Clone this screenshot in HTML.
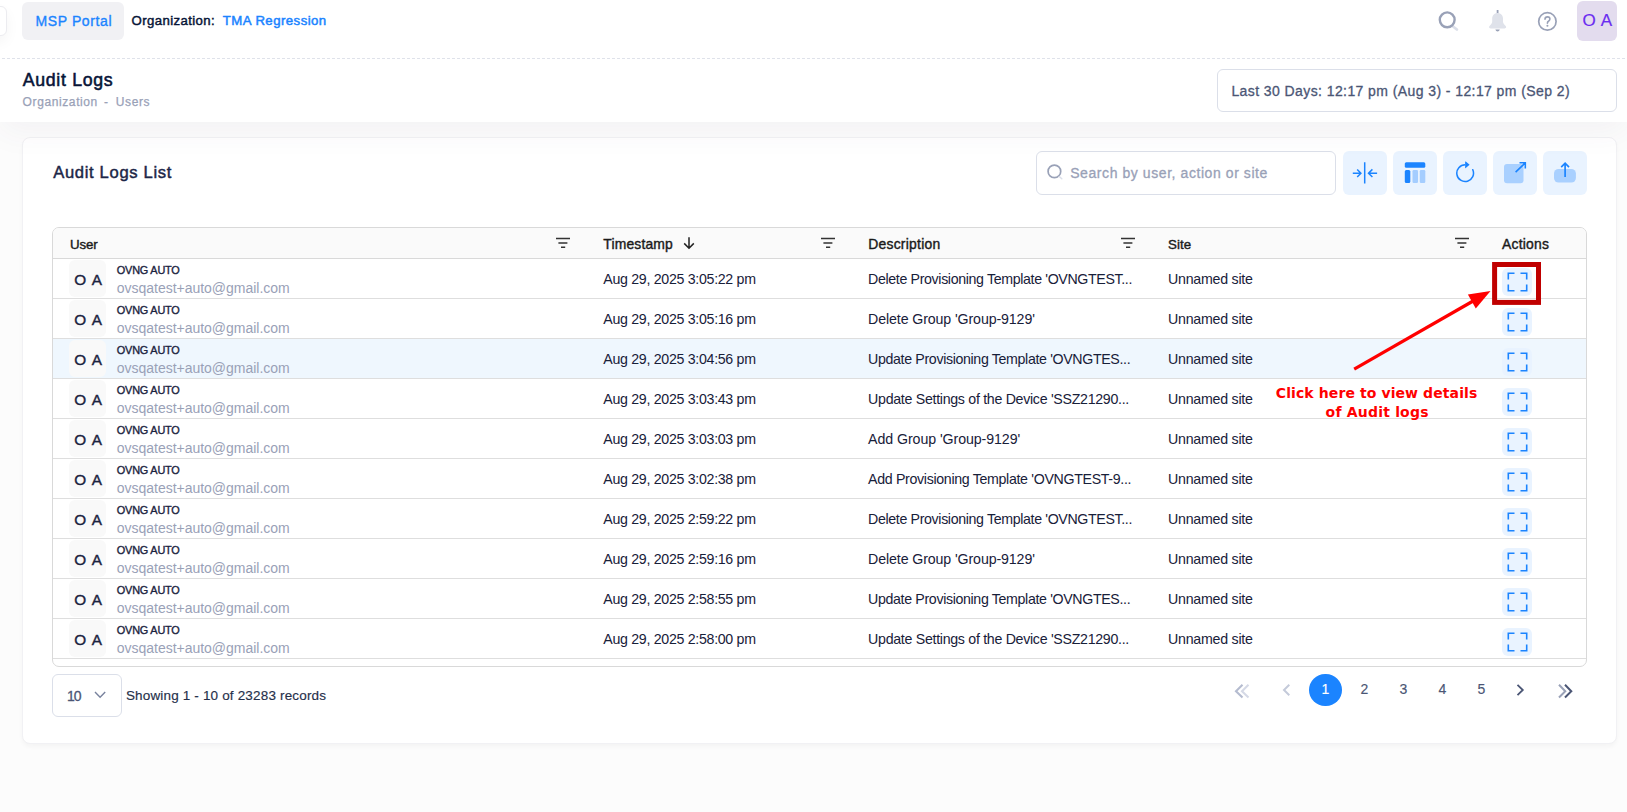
<!DOCTYPE html>
<html lang="en"><head><meta charset="utf-8"><title>Audit Logs</title>
<style>
html,body{margin:0;padding:0}
body{width:1627px;height:812px;overflow:hidden;position:relative;background:#fcfcfc;font-family:"Liberation Sans",sans-serif}
div,header,main,section,nav,svg,h1,h2,span,button{position:absolute;box-sizing:border-box;margin:0;padding:0}
.t{white-space:nowrap;line-height:1;font-weight:400;display:block}
header.top{left:0;top:0;width:1627px;height:122px;background:#fff;}
.stub{left:-26px;top:6px;width:32.500px;height:30px;background:#fff;border:1px solid #ececf0;border-radius:6px;box-shadow:0 6px 14px rgba(0,0,0,.045)}
.msp{left:22px;top:2px;width:102px;height:38px;background:#f1f1f4;border-radius:6px}
.avatar{left:1577px;top:1px;width:40px;height:40px;background:#e3dcee;border-radius:6px}
.dash{left:2px;top:58px;width:1625px;height:1px;background:repeating-linear-gradient(90deg,#dfe2ea 0,#dfe2ea 3px,transparent 3px,transparent 5px)}
.datebox{left:1217px;top:69px;width:400px;height:42.5px;border:1px solid #dbdfe9;border-radius:6px;background:#fff}
main.card{left:22px;top:137px;width:1595px;height:607px;background:#fff;border:1px solid #f1f1f4;border-radius:8px;box-shadow:0 3px 4px rgba(0,0,0,.03)}
.abs{left:0;top:0;width:1627px;height:812px;pointer-events:none}
.search{left:1036px;top:151px;width:300px;height:44px;border:1px solid #dbdfe9;border-radius:6px;background:#fff}
.tb{top:151px;width:43.5px;height:44px;background:#e9f3ff;border-radius:6px;border:0}
.tbl{left:52px;top:227px;width:1535px;height:440px;border:1px solid #d9d9d9;border-radius:7px;background:#fff;overflow:hidden}
.thead{left:0;top:0;width:100%;height:31px;background:#fafafa;border-bottom:1px solid #d9d9d9}
.row{left:0;width:100%;height:40px;border-bottom:1px solid #dedede}
.row.hl{background:#eff7fe}
.uav{left:16.2px;top:1.3px;width:36.5px;height:36.6px;border-radius:6px;background:#f9f9f9}
.act{left:1449px;top:9px;width:30px;height:28px;border-radius:6px;background:#e9f3ff}
.psize{left:52.3px;top:674.2px;width:69.3px;height:42.6px;border:1px solid #dbdfe9;border-radius:6px;background:#fff}
.pg1{left:1309.1px;top:673.6px;width:32.8px;height:32.6px;border-radius:50%;background:#1b84ff}

.lfade{display:none}
.hshadow{left:0;top:0;width:1627px;height:122px;box-shadow:0 10px 30px rgba(82,63,105,.05);z-index:3;pointer-events:none}

</style></head><body>

<header class="top">
  <div class="stub"></div>
  <div class="msp"></div>
  <svg style="left:1436px;top:9px" width="26" height="26" viewBox="0 0 26 26" fill="none"><path d="M17 17.500L20.900 20.500" stroke="#dbdfe9" stroke-width="2.800" stroke-linecap="round"/><circle cx="11.200" cy="10.800" r="7.400" stroke="#99a1b7" stroke-width="2.400"/></svg>
  <svg style="left:1485px;top:8px" width="26" height="26" viewBox="0 0 26 26" fill="none"><path d="M12.600 2V5.500" stroke="#99a1b7" stroke-width="1.800"/><path d="M12.600 4.900C9.200 4.900 7.200 7.400 7.200 10.600V13.600C7.200 15.200 6.400 16.300 5 17.600C3.400 19 3.900 20.400 5.600 20.400H19.600C21.300 20.400 21.800 19 20.200 17.600C18.800 16.300 18 15.200 18 13.600V10.600C18 7.400 16 4.900 12.600 4.900Z" fill="#dfe2ea"/><path d="M10.400 21.400h4.400c-.3 1.300-1.200 2-2.200 2s-1.900-.7-2.200-2z" fill="#99a1b7"/></svg>
  <svg style="left:1536px;top:9.500px" width="24" height="24" viewBox="0 0 24 24" fill="none"><circle cx="11.400" cy="11.400" r="8.700" stroke="#99a1b7" stroke-width="1.700"/><path d="M9 9.300c0-1.500 1.100-2.400 2.500-2.400s2.400.9 2.400 2.200c0 1.100-.6 1.700-1.400 2.200-.8.500-1.100 1-1.100 1.900" stroke="#99a1b7" stroke-width="1.600" stroke-linecap="round"/><circle cx="11.400" cy="15.800" r="1.050" fill="#99a1b7"/></svg>
  <div class="avatar"></div>
  <div class="dash"></div>
  <div class="datebox"></div>
</header>
<div class="lfade"></div>
<main class="card"></main>
<section class="abs">
  <div class="search"></div>
  <svg style="left:1046px;top:163px" width="18" height="18" viewBox="0 0 18 18" fill="none"><circle cx="8.400" cy="8.400" r="6.300" stroke="#99a1b7" stroke-width="1.700"/><path d="M13.300 13.500L15.800 15.700" stroke="#dbdfe9" stroke-width="1.500" stroke-linecap="round"/></svg>
  <div class="tb" style="left:1343px"><svg style="left:0;top:0" width="44" height="44" viewBox="0 0 44 44" fill="none" stroke="#1b84ff" stroke-width="1.500"><path d="M21.700 11.300V32.400M9.800 22.200H17.700M14.200 18.400L17.900 22.200L14.200 26M34.100 22.200H25.700M29.400 18.400L25.500 22.200L29.400 26"/></svg></div>
  <div class="tb" style="left:1393px"><svg style="left:0;top:0" width="44" height="44" viewBox="0 0 44 44"><rect x="11.800" y="11.300" width="20.500" height="5.400" rx="1.500" fill="#1b84ff"/><rect x="11.800" y="19.100" width="5.500" height="12.800" rx="1.500" fill="#1b84ff"/><rect x="19.500" y="19.100" width="5.500" height="12.800" rx="1.200" fill="#a4cdff"/><rect x="26.800" y="19.100" width="5.500" height="12.800" rx="1.200" fill="#a4cdff"/></svg></div>
  <div class="tb" style="left:1443px"><svg style="left:9.800px;top:9.600px" width="24.300" height="24.300" viewBox="0 0 16 16" fill="#1b84ff"><path fill-rule="evenodd" d="M8 3a5 5 0 1 0 4.546 2.914.5.5 0 0 1 .908-.417A6 6 0 1 1 8 2z"/><path d="M8 4.466V.534a.25.25 0 0 1 .41-.192l2.360 1.966c.12.1.12.284 0 .384L8.410 4.658A.25.25 0 0 1 8 4.466"/></svg></div>
  <div class="tb" style="left:1493px"><svg style="left:0;top:0" width="44" height="44" viewBox="0 0 44 44" fill="none"><rect x="11" y="13.100" width="19.500" height="19.200" rx="3" fill="#a9d0ff"/><path d="M22.600 21.100L32.300 11.900M26.500 11.800H32.300V17.600" stroke="#1b84ff" stroke-width="1.600"/></svg></div>
  <div class="tb" style="left:1543px"><svg style="left:0;top:0" width="44" height="44" viewBox="0 0 44 44" fill="none"><rect x="11" y="18" width="21.900" height="13.600" rx="4.500" fill="#a9d0ff"/><path d="M22.100 26V12.300M18.200 16.100L22.100 12.200L26 16.100" stroke="#1b84ff" stroke-width="1.700"/></svg></div>
  <div class="tbl">
    <div class="thead"></div>
<div class="row" style="top:31.0px"><div class="uav"></div><div class="act"><svg style="left:4.5px;top:3.5px" width="21" height="20" viewBox="0 0 21 20" fill="none" stroke="#1b84ff" stroke-width="1.6"><path d="M1.3 7.5V1.3H7.5M13.5 1.3H19.7V7.5M19.7 12.5V18.7H13.5M7.5 18.7H1.3V12.5"/></svg></div></div>
<div class="row" style="top:71.0px"><div class="uav"></div><div class="act"><svg style="left:4.5px;top:3.5px" width="21" height="20" viewBox="0 0 21 20" fill="none" stroke="#1b84ff" stroke-width="1.6"><path d="M1.3 7.5V1.3H7.5M13.5 1.3H19.7V7.5M19.7 12.5V18.7H13.5M7.5 18.7H1.3V12.5"/></svg></div></div>
<div class="row hl" style="top:111.0px"><div class="uav"></div><div class="act"><svg style="left:4.5px;top:3.5px" width="21" height="20" viewBox="0 0 21 20" fill="none" stroke="#1b84ff" stroke-width="1.6"><path d="M1.3 7.5V1.3H7.5M13.5 1.3H19.7V7.5M19.7 12.5V18.7H13.5M7.5 18.7H1.3V12.5"/></svg></div></div>
<div class="row" style="top:151.0px"><div class="uav"></div><div class="act"><svg style="left:4.5px;top:3.5px" width="21" height="20" viewBox="0 0 21 20" fill="none" stroke="#1b84ff" stroke-width="1.6"><path d="M1.3 7.5V1.3H7.5M13.5 1.3H19.7V7.5M19.7 12.5V18.7H13.5M7.5 18.7H1.3V12.5"/></svg></div></div>
<div class="row" style="top:191.0px"><div class="uav"></div><div class="act"><svg style="left:4.5px;top:3.5px" width="21" height="20" viewBox="0 0 21 20" fill="none" stroke="#1b84ff" stroke-width="1.6"><path d="M1.3 7.5V1.3H7.5M13.5 1.3H19.7V7.5M19.7 12.5V18.7H13.5M7.5 18.7H1.3V12.5"/></svg></div></div>
<div class="row" style="top:231.0px"><div class="uav"></div><div class="act"><svg style="left:4.5px;top:3.5px" width="21" height="20" viewBox="0 0 21 20" fill="none" stroke="#1b84ff" stroke-width="1.6"><path d="M1.3 7.5V1.3H7.5M13.5 1.3H19.7V7.5M19.7 12.5V18.7H13.5M7.5 18.7H1.3V12.5"/></svg></div></div>
<div class="row" style="top:271.0px"><div class="uav"></div><div class="act"><svg style="left:4.5px;top:3.5px" width="21" height="20" viewBox="0 0 21 20" fill="none" stroke="#1b84ff" stroke-width="1.6"><path d="M1.3 7.5V1.3H7.5M13.5 1.3H19.7V7.5M19.7 12.5V18.7H13.5M7.5 18.7H1.3V12.5"/></svg></div></div>
<div class="row" style="top:311.0px"><div class="uav"></div><div class="act"><svg style="left:4.5px;top:3.5px" width="21" height="20" viewBox="0 0 21 20" fill="none" stroke="#1b84ff" stroke-width="1.6"><path d="M1.3 7.5V1.3H7.5M13.5 1.3H19.7V7.5M19.7 12.5V18.7H13.5M7.5 18.7H1.3V12.5"/></svg></div></div>
<div class="row" style="top:351.0px"><div class="uav"></div><div class="act"><svg style="left:4.5px;top:3.5px" width="21" height="20" viewBox="0 0 21 20" fill="none" stroke="#1b84ff" stroke-width="1.6"><path d="M1.3 7.5V1.3H7.5M13.5 1.3H19.7V7.5M19.7 12.5V18.7H13.5M7.5 18.7H1.3V12.5"/></svg></div></div>
<div class="row" style="top:391.0px"><div class="uav"></div><div class="act"><svg style="left:4.5px;top:3.5px" width="21" height="20" viewBox="0 0 21 20" fill="none" stroke="#1b84ff" stroke-width="1.6"><path d="M1.3 7.5V1.3H7.5M13.5 1.3H19.7V7.5M19.7 12.5V18.7H13.5M7.5 18.7H1.3V12.5"/></svg></div></div>
  </div>
  <svg style="left:556px;top:236.400px" width="14" height="14" viewBox="0 0 14 14" stroke="#333" stroke-width="1.5" fill="none"><path d="M0 2.6H14M2.4 6.9H11.4M5 11.2H9.2"/></svg><svg style="left:821px;top:236.400px" width="14" height="14" viewBox="0 0 14 14" stroke="#333" stroke-width="1.5" fill="none"><path d="M0 2.6H14M2.4 6.9H11.4M5 11.2H9.2"/></svg><svg style="left:1121px;top:236.400px" width="14" height="14" viewBox="0 0 14 14" stroke="#333" stroke-width="1.5" fill="none"><path d="M0 2.6H14M2.4 6.9H11.4M5 11.2H9.2"/></svg><svg style="left:1455px;top:236.400px" width="14" height="14" viewBox="0 0 14 14" stroke="#333" stroke-width="1.5" fill="none"><path d="M0 2.6H14M2.4 6.9H11.4M5 11.2H9.2"/></svg>
  <svg style="left:682px;top:236px" width="14" height="14" viewBox="0 0 14 14" fill="none" stroke="#222" stroke-width="1.500"><path d="M7 1.300V12M2.200 7.400L7 12.200L11.800 7.400"/></svg>
  <div class="psize"></div>
  <svg style="left:93px;top:689px" width="14" height="12" viewBox="0 0 14 12" fill="none" stroke="#78829d" stroke-width="1.400"><path d="M2 3L7.100 8.200L12.200 3"/></svg>
  <nav class="abs">
    <svg style="left:1232px;top:682px" width="20" height="18" viewBox="0 0 20 18" fill="none" stroke-width="2.100"><path d="M10.500 2.800L4 9.200L10.500 15.500" stroke="#b5bcd0"/><path d="M16.500 2.800L10 9.200L16.500 15.500" stroke="#d5d9e6"/></svg>
    <svg style="left:1280px;top:682px" width="14" height="16" viewBox="0 0 14 16" fill="none" stroke="#c4cada" stroke-width="2"><path d="M9.300 2.800L4 8L9.300 13.200"/></svg>
    <div class="pg1"></div>
    <svg style="left:1513px;top:682px" width="14" height="16" viewBox="0 0 14 16" fill="none" stroke="#4b5675" stroke-width="1.800"><path d="M4.500 2.800L9.800 8L4.500 13.200"/></svg>
    <svg style="left:1555px;top:682px" width="20" height="18" viewBox="0 0 20 18" fill="none" stroke-width="2"><path d="M4 2.800L10.300 9.200L4 15.500" stroke="#99a1b7"/><path d="M10 2.800L16.300 9.200L10 15.500" stroke="#4b5675"/></svg>
  </nav>
  <svg style="left:0;top:0" width="1627" height="812" viewBox="0 0 1627 812" fill="none"><rect x="1494.600" y="264.500" width="43.900" height="37.900" stroke="#c00000" stroke-width="5"/><path d="M1354.200 369.100L1474 300.500" stroke="#ff0000" stroke-width="3.200"/><path d="M1490.500 291.100L1467.900 294.600L1475.800 308.400Z" fill="#ff0000"/></svg>
</section>
<div class="hshadow"></div>

<div id="txt">
<span class="t" style="left:35.50px;top:14.00px;font-size:14px;color:#1b84ff;-webkit-text-stroke:0.35px #1b84ff;letter-spacing:0.606px;">MSP Portal</span>
<span class="t" style="left:131.50px;top:14.00px;font-size:13.2px;color:#071437;-webkit-text-stroke:0.45px #071437;letter-spacing:0.397px;">Organization:</span>
<span class="t" style="left:222.80px;top:14.00px;font-size:13.2px;color:#1b84ff;-webkit-text-stroke:0.5px #1b84ff;letter-spacing:0.455px;">TMA Regression</span>
<span class="t" style="left:1582.40px;top:12.00px;font-size:17px;color:#6a2cf0;-webkit-text-stroke:0.2px #6a2cf0;letter-spacing:0.620px;">O A</span>
<h1 class="t" style="left:22.80px;top:72.00px;font-size:17.7px;color:#071437;-webkit-text-stroke:0.55px #071437;letter-spacing:0.701px;">Audit Logs</h1>
<span class="t" style="left:22.60px;top:96.00px;font-size:12px;color:#99a1b7;-webkit-text-stroke:0.25px #99a1b7;letter-spacing:0.605px;">Organization</span>
<span class="t" style="left:104.00px;top:96.00px;font-size:12px;color:#99a1b7;-webkit-text-stroke:0.25px #99a1b7;letter-spacing:0.000px;">-</span>
<span class="t" style="left:115.80px;top:96.00px;font-size:12px;color:#99a1b7;-webkit-text-stroke:0.25px #99a1b7;letter-spacing:0.614px;">Users</span>
<span class="t" style="left:1231.40px;top:84.00px;font-size:14px;color:#4b5675;-webkit-text-stroke:0.3px #4b5675;letter-spacing:0.415px;">Last 30 Days: 12:17 pm (Aug 3) - 12:17 pm (Sep 2)</span>
<h2 class="t" style="left:53.20px;top:165.00px;font-size:16.6px;color:#1c2647;-webkit-text-stroke:0.45px #1c2647;letter-spacing:0.667px;">Audit Logs List</h2>
<span class="t" style="left:1070.20px;top:166.00px;font-size:14px;color:#99a1b7;-webkit-text-stroke:0.3px #99a1b7;letter-spacing:0.574px;">Search by user, action or site</span>
<span class="t" style="left:70.00px;top:238.00px;font-size:13.3px;color:#1a1a1a;-webkit-text-stroke:0.4px #1a1a1a;letter-spacing:-0.159px;">User</span>
<span class="t" style="left:603.30px;top:238.00px;font-size:13.9px;color:#1a1a1a;-webkit-text-stroke:0.4px #1a1a1a;letter-spacing:0.164px;">Timestamp</span>
<span class="t" style="left:868.20px;top:238.00px;font-size:13.9px;color:#1a1a1a;-webkit-text-stroke:0.4px #1a1a1a;letter-spacing:0.252px;">Description</span>
<span class="t" style="left:1168.00px;top:238.00px;font-size:13.3px;color:#1a1a1a;-webkit-text-stroke:0.4px #1a1a1a;letter-spacing:0.093px;">Site</span>
<span class="t" style="left:1502.00px;top:238.00px;font-size:13.9px;color:#1a1a1a;-webkit-text-stroke:0.4px #1a1a1a;letter-spacing:0.240px;">Actions</span>
<span class="t" style="left:74.20px;top:272.00px;font-size:15.3px;color:#1b2340;-webkit-text-stroke:0.4px #1b2340;letter-spacing:1.092px;">O A</span>
<span class="t" style="left:116.80px;top:265.00px;font-size:10.9px;color:#1b2340;-webkit-text-stroke:0.35px #1b2340;letter-spacing:-0.195px;">OVNG AUTO</span>
<span class="t" style="left:116.80px;top:281.00px;font-size:14px;color:#99a1b7;letter-spacing:-0.020px;">ovsqatest+auto@gmail.com</span>
<span class="t" style="left:603.30px;top:272.00px;font-size:14.2px;color:#182039;letter-spacing:-0.302px;">Aug 29, 2025 3:05:22 pm</span>
<span class="t" style="left:868.10px;top:272.00px;font-size:14.2px;color:#182039;letter-spacing:-0.353px;">Delete Provisioning Template 'OVNGTEST...</span>
<span class="t" style="left:1168.10px;top:272.00px;font-size:14.2px;color:#182039;letter-spacing:-0.250px;">Unnamed site</span>
<span class="t" style="left:74.20px;top:312.00px;font-size:15.3px;color:#1b2340;-webkit-text-stroke:0.4px #1b2340;letter-spacing:1.092px;">O A</span>
<span class="t" style="left:116.80px;top:305.00px;font-size:10.9px;color:#1b2340;-webkit-text-stroke:0.35px #1b2340;letter-spacing:-0.195px;">OVNG AUTO</span>
<span class="t" style="left:116.80px;top:321.00px;font-size:14px;color:#99a1b7;letter-spacing:-0.020px;">ovsqatest+auto@gmail.com</span>
<span class="t" style="left:603.30px;top:312.00px;font-size:14.2px;color:#182039;letter-spacing:-0.302px;">Aug 29, 2025 3:05:16 pm</span>
<span class="t" style="left:868.10px;top:312.00px;font-size:14.2px;color:#182039;letter-spacing:-0.111px;">Delete Group 'Group-9129'</span>
<span class="t" style="left:1168.10px;top:312.00px;font-size:14.2px;color:#182039;letter-spacing:-0.250px;">Unnamed site</span>
<span class="t" style="left:74.20px;top:352.00px;font-size:15.3px;color:#1b2340;-webkit-text-stroke:0.4px #1b2340;letter-spacing:1.092px;">O A</span>
<span class="t" style="left:116.80px;top:345.00px;font-size:10.9px;color:#1b2340;-webkit-text-stroke:0.35px #1b2340;letter-spacing:-0.195px;">OVNG AUTO</span>
<span class="t" style="left:116.80px;top:361.00px;font-size:14px;color:#99a1b7;letter-spacing:-0.020px;">ovsqatest+auto@gmail.com</span>
<span class="t" style="left:603.30px;top:352.00px;font-size:14.2px;color:#182039;letter-spacing:-0.302px;">Aug 29, 2025 3:04:56 pm</span>
<span class="t" style="left:868.10px;top:352.00px;font-size:14.2px;color:#182039;letter-spacing:-0.348px;">Update Provisioning Template 'OVNGTES...</span>
<span class="t" style="left:1168.10px;top:352.00px;font-size:14.2px;color:#182039;letter-spacing:-0.250px;">Unnamed site</span>
<span class="t" style="left:74.20px;top:392.00px;font-size:15.3px;color:#1b2340;-webkit-text-stroke:0.4px #1b2340;letter-spacing:1.092px;">O A</span>
<span class="t" style="left:116.80px;top:385.00px;font-size:10.9px;color:#1b2340;-webkit-text-stroke:0.35px #1b2340;letter-spacing:-0.195px;">OVNG AUTO</span>
<span class="t" style="left:116.80px;top:401.00px;font-size:14px;color:#99a1b7;letter-spacing:-0.020px;">ovsqatest+auto@gmail.com</span>
<span class="t" style="left:603.30px;top:392.00px;font-size:14.2px;color:#182039;letter-spacing:-0.302px;">Aug 29, 2025 3:03:43 pm</span>
<span class="t" style="left:868.10px;top:392.00px;font-size:14.2px;color:#182039;letter-spacing:-0.294px;">Update Settings of the Device 'SSZ21290...</span>
<span class="t" style="left:1168.10px;top:392.00px;font-size:14.2px;color:#182039;letter-spacing:-0.250px;">Unnamed site</span>
<span class="t" style="left:74.20px;top:432.00px;font-size:15.3px;color:#1b2340;-webkit-text-stroke:0.4px #1b2340;letter-spacing:1.092px;">O A</span>
<span class="t" style="left:116.80px;top:425.00px;font-size:10.9px;color:#1b2340;-webkit-text-stroke:0.35px #1b2340;letter-spacing:-0.195px;">OVNG AUTO</span>
<span class="t" style="left:116.80px;top:441.00px;font-size:14px;color:#99a1b7;letter-spacing:-0.020px;">ovsqatest+auto@gmail.com</span>
<span class="t" style="left:603.30px;top:432.00px;font-size:14.2px;color:#182039;letter-spacing:-0.302px;">Aug 29, 2025 3:03:03 pm</span>
<span class="t" style="left:868.10px;top:432.00px;font-size:14.2px;color:#182039;letter-spacing:-0.076px;">Add Group 'Group-9129'</span>
<span class="t" style="left:1168.10px;top:432.00px;font-size:14.2px;color:#182039;letter-spacing:-0.250px;">Unnamed site</span>
<span class="t" style="left:74.20px;top:472.00px;font-size:15.3px;color:#1b2340;-webkit-text-stroke:0.4px #1b2340;letter-spacing:1.092px;">O A</span>
<span class="t" style="left:116.80px;top:465.00px;font-size:10.9px;color:#1b2340;-webkit-text-stroke:0.35px #1b2340;letter-spacing:-0.195px;">OVNG AUTO</span>
<span class="t" style="left:116.80px;top:481.00px;font-size:14px;color:#99a1b7;letter-spacing:-0.020px;">ovsqatest+auto@gmail.com</span>
<span class="t" style="left:603.30px;top:472.00px;font-size:14.2px;color:#182039;letter-spacing:-0.302px;">Aug 29, 2025 3:02:38 pm</span>
<span class="t" style="left:868.10px;top:472.00px;font-size:14.2px;color:#182039;letter-spacing:-0.325px;">Add Provisioning Template 'OVNGTEST-9...</span>
<span class="t" style="left:1168.10px;top:472.00px;font-size:14.2px;color:#182039;letter-spacing:-0.250px;">Unnamed site</span>
<span class="t" style="left:74.20px;top:512.00px;font-size:15.3px;color:#1b2340;-webkit-text-stroke:0.4px #1b2340;letter-spacing:1.092px;">O A</span>
<span class="t" style="left:116.80px;top:505.00px;font-size:10.9px;color:#1b2340;-webkit-text-stroke:0.35px #1b2340;letter-spacing:-0.195px;">OVNG AUTO</span>
<span class="t" style="left:116.80px;top:521.00px;font-size:14px;color:#99a1b7;letter-spacing:-0.020px;">ovsqatest+auto@gmail.com</span>
<span class="t" style="left:603.30px;top:512.00px;font-size:14.2px;color:#182039;letter-spacing:-0.302px;">Aug 29, 2025 2:59:22 pm</span>
<span class="t" style="left:868.10px;top:512.00px;font-size:14.2px;color:#182039;letter-spacing:-0.353px;">Delete Provisioning Template 'OVNGTEST...</span>
<span class="t" style="left:1168.10px;top:512.00px;font-size:14.2px;color:#182039;letter-spacing:-0.250px;">Unnamed site</span>
<span class="t" style="left:74.20px;top:552.00px;font-size:15.3px;color:#1b2340;-webkit-text-stroke:0.4px #1b2340;letter-spacing:1.092px;">O A</span>
<span class="t" style="left:116.80px;top:545.00px;font-size:10.9px;color:#1b2340;-webkit-text-stroke:0.35px #1b2340;letter-spacing:-0.195px;">OVNG AUTO</span>
<span class="t" style="left:116.80px;top:561.00px;font-size:14px;color:#99a1b7;letter-spacing:-0.020px;">ovsqatest+auto@gmail.com</span>
<span class="t" style="left:603.30px;top:552.00px;font-size:14.2px;color:#182039;letter-spacing:-0.302px;">Aug 29, 2025 2:59:16 pm</span>
<span class="t" style="left:868.10px;top:552.00px;font-size:14.2px;color:#182039;letter-spacing:-0.111px;">Delete Group 'Group-9129'</span>
<span class="t" style="left:1168.10px;top:552.00px;font-size:14.2px;color:#182039;letter-spacing:-0.250px;">Unnamed site</span>
<span class="t" style="left:74.20px;top:592.00px;font-size:15.3px;color:#1b2340;-webkit-text-stroke:0.4px #1b2340;letter-spacing:1.092px;">O A</span>
<span class="t" style="left:116.80px;top:585.00px;font-size:10.9px;color:#1b2340;-webkit-text-stroke:0.35px #1b2340;letter-spacing:-0.195px;">OVNG AUTO</span>
<span class="t" style="left:116.80px;top:601.00px;font-size:14px;color:#99a1b7;letter-spacing:-0.020px;">ovsqatest+auto@gmail.com</span>
<span class="t" style="left:603.30px;top:592.00px;font-size:14.2px;color:#182039;letter-spacing:-0.302px;">Aug 29, 2025 2:58:55 pm</span>
<span class="t" style="left:868.10px;top:592.00px;font-size:14.2px;color:#182039;letter-spacing:-0.348px;">Update Provisioning Template 'OVNGTES...</span>
<span class="t" style="left:1168.10px;top:592.00px;font-size:14.2px;color:#182039;letter-spacing:-0.250px;">Unnamed site</span>
<span class="t" style="left:74.20px;top:632.00px;font-size:15.3px;color:#1b2340;-webkit-text-stroke:0.4px #1b2340;letter-spacing:1.092px;">O A</span>
<span class="t" style="left:116.80px;top:625.00px;font-size:10.9px;color:#1b2340;-webkit-text-stroke:0.35px #1b2340;letter-spacing:-0.195px;">OVNG AUTO</span>
<span class="t" style="left:116.80px;top:641.00px;font-size:14px;color:#99a1b7;letter-spacing:-0.020px;">ovsqatest+auto@gmail.com</span>
<span class="t" style="left:603.30px;top:632.00px;font-size:14.2px;color:#182039;letter-spacing:-0.302px;">Aug 29, 2025 2:58:00 pm</span>
<span class="t" style="left:868.10px;top:632.00px;font-size:14.2px;color:#182039;letter-spacing:-0.294px;">Update Settings of the Device 'SSZ21290...</span>
<span class="t" style="left:1168.10px;top:632.00px;font-size:14.2px;color:#182039;letter-spacing:-0.250px;">Unnamed site</span>
<span class="t" style="left:66.90px;top:689.00px;font-size:14px;color:#4b5675;-webkit-text-stroke:0.3px #4b5675;letter-spacing:-0.878px;">10</span>
<span class="t" style="left:125.90px;top:689.00px;font-size:13.5px;color:#252f4a;-webkit-text-stroke:0.15px #252f4a;letter-spacing:0.166px;">Showing 1 - 10 of 23283 records</span>
<span class="t" style="left:1321.60px;top:682.00px;font-size:14px;color:#ffffff;-webkit-text-stroke:0.15px #ffffff;">1</span>
<span class="t" style="left:1360.60px;top:682.00px;font-size:14px;color:#4b5675;-webkit-text-stroke:0.15px #4b5675;">2</span>
<span class="t" style="left:1399.50px;top:682.00px;font-size:14px;color:#4b5675;-webkit-text-stroke:0.15px #4b5675;">3</span>
<span class="t" style="left:1438.40px;top:682.00px;font-size:14px;color:#4b5675;-webkit-text-stroke:0.15px #4b5675;">4</span>
<span class="t" style="left:1477.50px;top:682.00px;font-size:14px;color:#4b5675;-webkit-text-stroke:0.15px #4b5675;">5</span>
<span class="t" style="left:1275.80px;top:386.00px;font-size:14px;color:#ff0000;font-weight:700;font-family:'DejaVu Sans', 'Liberation Sans', sans-serif;letter-spacing:0.096px;">Click here to view details</span>
<span class="t" style="left:1325.60px;top:405.00px;font-size:14px;color:#ff0000;font-weight:700;font-family:'DejaVu Sans', 'Liberation Sans', sans-serif;letter-spacing:0.196px;">of Audit logs</span>
</div>
</body></html>
